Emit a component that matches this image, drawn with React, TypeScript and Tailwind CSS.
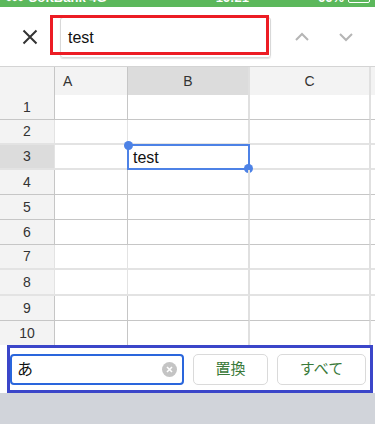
import React from 'react';

const rows = [
  { n: 1, line: 'border-b border-[#c6c6c6]', h: 'h-[25px]' },
  { n: 2, line: 'border-b-2 border-[#e3e3e3]', h: 'h-[25px]' },
  { n: 3, line: 'border-b-2 border-[#e3e3e3]', h: 'h-[25px]' },
  { n: 4, line: 'border-b border-[#c6c6c6]', h: 'h-[25px]' },
  { n: 5, line: 'border-b border-[#c6c6c6]', h: 'h-[25px]' },
  { n: 6, line: 'border-b border-[#c6c6c6]', h: 'h-[25px]' },
  { n: 7, line: 'border-b-2 border-[#e3e3e3]', h: 'h-[25px]' },
  { n: 8, line: 'border-b-2 border-[#e3e3e3]', h: 'h-[26px]' },
  { n: 9, line: 'border-b border-[#c6c6c6]', h: 'h-[25px]' },
  { n: 10, line: 'border-b border-[#c6c6c6]', h: 'h-[25px]' },
];

const StatusBar: React.FC = () => (
  <div className="h-[7px] bg-[#5cb85c] overflow-hidden">
    <div className="h-[20px] -mt-[12px] flex items-center justify-between px-[5px] text-[13px] font-semibold text-white">
      <div className="flex items-center gap-[6px]">
        <span className="tracking-[-2px]">●●●</span>
        <span>SoftBank 4G</span>
      </div>
      <span className="ml-[40px]">16:21</span>
      <div className="flex items-center gap-[4px]">
        <span>66%</span>
        <span className="w-[22px] h-[10px] border border-white rounded-[2px]" />
      </div>
    </div>
  </div>
);

const SearchHeader: React.FC = () => (
  <div className="relative h-[59px] flex items-center pl-[22px]">
    <svg width="16" height="16" viewBox="0 0 16 16" className="mt-[1px]">
      <path d="M1.5 1.5 L14.5 14.5 M14.5 1.5 L1.5 14.5" stroke="#333" strokeWidth="2" fill="none" />
    </svg>
    <div className="ml-[22px] w-[211px] h-[41px] mt-[2px] border border-[#d8d8d8] rounded-[3px] shadow-[0_1px_1px_rgba(0,0,0,0.12)] flex items-center pl-[7px] text-[16px] text-[#111]">
      test
    </div>
    <svg width="16" height="10" viewBox="0 0 16 10" className="ml-[23px]">
      <path d="M2 8 L8 2 L14 8" stroke="#b5b5b5" strokeWidth="2" fill="none" />
    </svg>
    <svg width="16" height="10" viewBox="0 0 16 10" className="ml-[28px]">
      <path d="M2 2 L8 8 L14 2" stroke="#b5b5b5" strokeWidth="2" fill="none" />
    </svg>
    <div className="absolute left-[50px] top-[8px] w-[219px] h-[40px] border-[3px] border-[#ec1c24]" />
  </div>
);

const Grid: React.FC = () => (
  <div className="h-[279px] overflow-hidden border-t border-[#d4d4d4] text-[14px] text-[#333]">
    <div className="flex h-[28px]">
      <div className="w-[55px] bg-[#f3f3f3] border-r border-[#c6c6c6]" />
      <div className="w-[73px] bg-[#f3f3f3] border-r border-[#c6c6c6] flex items-center pl-[8px]">A</div>
      <div className="w-[122px] bg-[#dcdcdc] border-r-2 border-[#e0e0e0] flex items-center justify-center">B</div>
      <div className="w-[121px] bg-[#f3f3f3] border-r-2 border-[#e0e0e0] flex items-center justify-center">C</div>
      <div className="flex-1 bg-[#f3f3f3]" />
    </div>
    {rows.map((r) => (
      <div key={r.n} className={`flex ${r.h}`}>
        <div
          className={`w-[55px] border-r border-[#c6c6c6] flex items-center justify-center ${r.line} ${
            r.n === 3 ? 'bg-[#dcdcdc]' : 'bg-[#f3f3f3]'
          }`}
        >
          {r.n}
        </div>
        <div className={`w-[73px] border-r border-[#c6c6c6] ${r.line}`} />
        <div className={`relative w-[122px] border-r-2 border-r-[#e0e0e0] ${r.line}`}>
          {r.n === 3 && (
            <div className="absolute -left-[1px] -top-[1px] w-[123px] h-[26px] border-2 border-[#4d82e6] flex items-center pl-[4px] pt-[2px] text-[16px] text-[#111]">
              test
              <span className="absolute -left-[5px] -top-[5px] w-[9px] h-[9px] rounded-full bg-[#4d82e6]" />
              <span className="absolute -right-[5px] -bottom-[5px] w-[9px] h-[9px] rounded-full bg-[#4d82e6]" />
            </div>
          )}
        </div>
        <div className={`w-[121px] border-r-2 border-r-[#e0e0e0] ${r.line}`} />
        <div className={`flex-1 ${r.line}`} />
      </div>
    ))}
  </div>
);

const ReplaceBar: React.FC = () => (
  <div className="relative h-[48px] bg-white flex items-start pt-[9px] pl-[10px] gap-[9px]">
    <div className="w-[174px] h-[31px] border-2 border-[#2a66dc] rounded-[4px] flex items-center pl-[5px] pr-[5px] text-[16px] text-[#111]">
      <span className="flex-1">あ</span>
      <span className="w-[15px] h-[15px] rounded-full bg-[#c4c4c4] flex items-center justify-center">
        <svg width="7" height="7" viewBox="0 0 7 7">
          <path d="M1 1 L6 6 M6 1 L1 6" stroke="#fff" strokeWidth="1.6" fill="none" />
        </svg>
      </span>
    </div>
    <button className="w-[75px] h-[31px] border border-[#dadada] rounded-[5px] text-[15px] text-[#3a7a3a]">置換</button>
    <button className="w-[89px] h-[31px] border border-[#dadada] rounded-[5px] text-[15px] text-[#3a7a3a]">すべて</button>
    <div className="absolute left-[7px] top-0 w-[366px] h-[48px] border-[3px] border-[#3b46c9]" />
  </div>
);

const App: React.FC = () => (
  <div className="w-[375px] h-[424px] overflow-hidden bg-white font-['Liberation_Sans','Noto_Sans_CJK_JP',sans-serif]">
    <StatusBar />
    <SearchHeader />
    <Grid />
    <ReplaceBar />
    <div className="h-[31px] bg-[#d1d4da]" />
  </div>
);

export default App;
